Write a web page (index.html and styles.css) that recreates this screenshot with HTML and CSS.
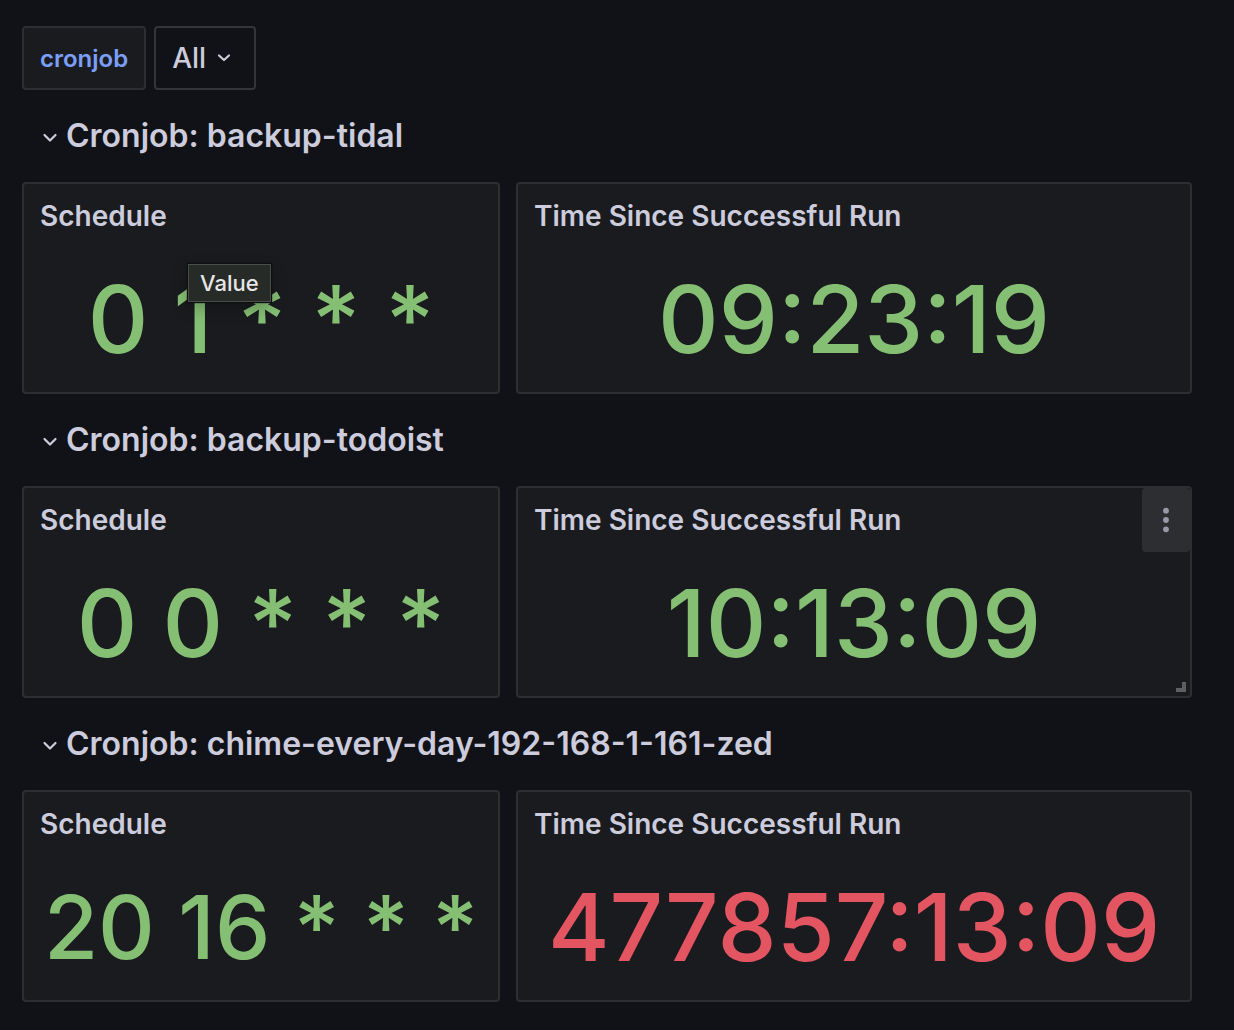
FILE: index.html
```html
<!DOCTYPE html>
<html lang="en">
<head>
<meta charset="utf-8">
<title>Cronjobs</title>
<link rel="stylesheet" href="styles.css">
</head>
<body>
<main class="dashboard">
  <div class="controls">
    <label class="variable-label" for="cronjob">cronjob</label>
    <div class="picker">
      <select class="picker-select" id="cronjob"><option>All</option></select>
      <svg class="picker-arrow" viewBox="0 0 14 10" aria-hidden="true"><path d="M2 2.500l5 4.500 5-4.500"/></svg>
    </div>
  </div>

  <section class="row">
    <h2 class="row-heading"><button class="row-toggle" type="button"><svg class="chevron" viewBox="0 0 16 16" aria-hidden="true"><path d="M2.500 7l5.500 5.500L13.500 7"/></svg>Cronjob: backup-tidal</button></h2>
    <div class="panels">
      <article class="panel">
        <h3 class="panel-title">Schedule</h3>
        <div class="stat">0 1 * * *</div>
        <div class="tooltip" role="tooltip">Value</div>
      </article>
      <article class="panel">
        <h3 class="panel-title">Time Since Successful Run</h3>
        <div class="stat">09:23:19</div>
      </article>
    </div>
  </section>

  <section class="row">
    <h2 class="row-heading"><button class="row-toggle" type="button"><svg class="chevron" viewBox="0 0 16 16" aria-hidden="true"><path d="M2.500 7l5.500 5.500L13.500 7"/></svg>Cronjob: backup-todoist</button></h2>
    <div class="panels">
      <article class="panel">
        <h3 class="panel-title">Schedule</h3>
        <div class="stat">0 0 * * *</div>
      </article>
      <article class="panel">
        <h3 class="panel-title">Time Since Successful Run</h3>
        <div class="stat">10:13:09</div>
        <button class="panel-menu" type="button" aria-label="Panel menu"><svg class="dots" viewBox="0 0 8 26" aria-hidden="true"><circle cx="4" cy="3.700" r="2.900"/><circle cx="4" cy="13" r="2.900"/><circle cx="4" cy="22.300" r="2.900"/></svg></button>
        <svg class="resize" viewBox="0 0 10 10" aria-hidden="true"><path d="M6 0h4v10H0V6h6z"/></svg>
      </article>
    </div>
  </section>

  <section class="row">
    <h2 class="row-heading"><button class="row-toggle" type="button"><svg class="chevron" viewBox="0 0 16 16" aria-hidden="true"><path d="M2.500 7l5.500 5.500L13.500 7"/></svg>Cronjob: chime-every-day-192-168-1-161-zed</button></h2>
    <div class="panels">
      <article class="panel">
        <h3 class="panel-title">Schedule</h3>
        <div class="stat stat-compact">20 16 * * *</div>
      </article>
      <article class="panel">
        <h3 class="panel-title">Time Since Successful Run</h3>
        <div class="stat stat-alert">477857:13:09</div>
      </article>
    </div>
  </section>
</main>
</body>
</html>
```

FILE: styles.css
```css
* { box-sizing: border-box; }

body {
  margin: 0;
  background: #111217;
  color: #ccccdc;
  font-family: Inter, "Liberation Sans", sans-serif;
  font-weight: 500;
}

button, select { font: inherit; color: inherit; }

.dashboard { padding: 26px 42px 28px 22px; }

.controls { display: flex; gap: 8px; height: 64px; }

.variable-label {
  display: flex;
  align-items: center;
  padding: 0 16px;
  border: 2px solid #2d2e32;
  border-radius: 4px;
  background: #1a1b1f;
  color: #7a9ff8;
  font-size: 24px;
  font-weight: 600;
}

.picker { display: grid; align-items: center; width: 102px; }

.picker-select {
  grid-area: 1 / 1;
  height: 100%;
  width: 100%;
  padding: 0 16px;
  appearance: none;
  border: 2px solid #34353b;
  border-radius: 4px;
  background: #111217;
  font-size: 28px;
}

.picker-arrow {
  grid-area: 1 / 1;
  justify-self: end;
  width: 14px;
  height: 10px;
  margin-right: 25px;
  pointer-events: none;
}

.picker-arrow, .chevron {
  fill: none;
  stroke: #ccccdc;
  stroke-width: 2.200;
  stroke-linecap: round;
  stroke-linejoin: round;
}

.row-heading {
  display: flex;
  align-items: center;
  height: 92px;
  margin: 0;
  padding-left: 20px;
}

.row-toggle {
  display: flex;
  align-items: center;
  gap: 8px;
  padding: 0;
  border: 0;
  background: none;
  font-size: 32px;
  font-weight: 600;
  line-height: 40px;
}

.chevron { width: 16px; height: 16px; }

.panels {
  display: grid;
  grid-template-columns: 478fr 676fr;
  gap: 16px;
}

.panel {
  position: relative;
  display: flex;
  flex-direction: column;
  height: 212px;
  border: 2px solid #2d2e32;
  border-radius: 4px;
  background: #1a1b1f;
}

.panel-title {
  margin: 0;
  padding: 0 16px;
  font-size: 28px;
  font-weight: 600;
  line-height: 64px;
}

.stat {
  flex: 1;
  color: #85bf74;
  font-size: 94px;
  line-height: 142px;
  text-align: center;
  white-space: nowrap;
}

.stat-compact { font-size: 88px; }
.stat-alert { color: #e25561; }

.tooltip {
  position: absolute;
  top: 80px;
  left: 164px;
  padding: 0 11px;
  border: 1px solid #4a4d4a;
  background: #272b28;
  box-shadow: 0 0 1px 1px #0d0e10, 0 6px 16px rgba(0, 0, 0, 0.25);
  color: #e6e6e6;
  font-size: 22px;
  line-height: 36px;
}

.panel-menu {
  position: absolute;
  top: 0;
  right: 0;
  display: grid;
  place-items: center;
  width: 48px;
  height: 64px;
  padding: 0;
  border: 0;
  border-radius: 4px;
  background: #2d2e32;
}

.dots { width: 8px; height: 26px; fill: #9899a6; }

.resize {
  position: absolute;
  right: 4px;
  bottom: 4px;
  width: 10px;
  height: 10px;
  fill: #5e5e60;
}
```
